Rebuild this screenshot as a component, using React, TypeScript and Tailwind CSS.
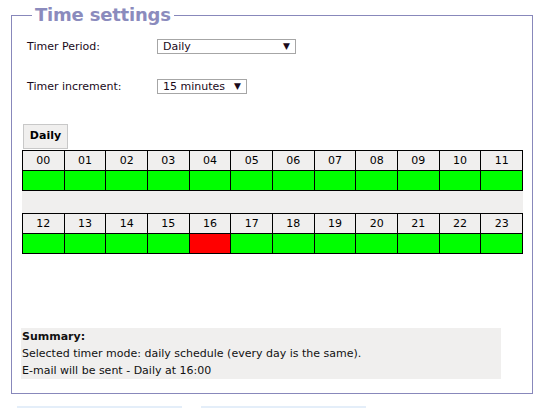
import React from "react";

const hours = Array.from({ length: 24 }, (_, i) => String(i).padStart(2, "0"));
const active = new Set(["16"]);

function HourTable({ items }: { items: string[] }) {
  return (
    <div className="w-[501px] border-l border-t border-black">
      <div className="grid grid-cols-12">
        {items.map((h) => (
          <div
            key={h}
            className="h-[20px] border-r border-b border-black bg-[#f0efee] text-center text-[11px] leading-[19px] text-black"
          >
            {h}
          </div>
        ))}
        {items.map((h) => (
          <div
            key={h + "-v"}
            className={`h-[20px] border-r border-b border-black ${active.has(h) ? "bg-[#ff0000]" : "bg-[#00ff00]"}`}
          />
        ))}
      </div>
    </div>
  );
}

function FakeSelect({ value, width }: { value: string; width: string }) {
  return (
    <div className={`flex h-[15px] items-center justify-between border border-[#a6a6a6] bg-white pl-[5px] pr-[5px] text-[11px] leading-[13px] text-[#1a0a1a] ${width}`}>
      <span>{value}</span>
      <span className="text-[9px]">▼</span>
    </div>
  );
}

export default function App() {
  return (
    <div className="h-[408px] w-[545px] overflow-hidden bg-white font-['DejaVu_Sans',Verdana,sans-serif] text-[11px]">
      <fieldset className="ml-[11px] mt-[3px] w-[522px] border border-[#8888bb] pb-[14px] pl-[10px] pr-0 pt-0">
        <legend className="ml-[10px] px-[3px] text-[18px] font-bold leading-[24px] tracking-[-0.2px] text-[#8b8bbd]">
          Time settings
        </legend>

        <div className="mt-[12px] flex h-[15px] items-center">
          <span className="ml-[5px] w-[130px] leading-[15px] text-[#1a0a1a]">Timer Period:</span>
          <FakeSelect value="Daily" width="w-[139px]" />
        </div>
        <div className="mt-[25px] flex h-[15px] items-center">
          <span className="ml-[5px] w-[130px] leading-[15px] text-[#1a0a1a]">Timer increment:</span>
          <FakeSelect value="15 minutes" width="w-[90px]" />
        </div>

        <div className="mt-[30px] ml-[1px] flex h-[25px] w-[45px] items-center justify-center border border-[#c8c8c8] bg-[#f0efee] text-[11px] font-bold text-black">
          Daily
        </div>
        <div className="mt-[1px]">
          <HourTable items={hours.slice(0, 12)} />
          <div className="h-[22px] w-[501px] bg-[#f0efee]" />
          <HourTable items={hours.slice(12)} />
        </div>

        <div className="mt-[74px] w-[480px] -ml-[1px] bg-[#f0efee] pl-[1px] text-[11px] leading-[17px] text-[#111111]">
          <div className="font-bold">Summary:</div>
          <div>Selected timer mode: daily schedule (every day is the same).</div>
          <div>E-mail will be sent - Daily at 16:00</div>
        </div>
      </fieldset>

      <div className="mt-[12px] flex gap-[19px] pl-[17px]">
        <div className="h-[24px] w-[165px] bg-[#e4eef9]" />
        <div className="h-[24px] w-[165px] bg-[#e4eef9]" />
      </div>
    </div>
  );
}
